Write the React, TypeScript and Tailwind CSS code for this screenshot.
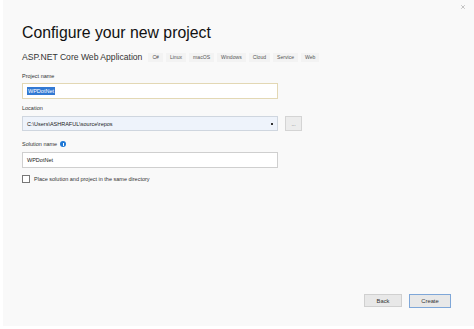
import { X } from 'lucide-react';

const tags = ['C#', 'Linux', 'macOS', 'Windows', 'Cloud', 'Service', 'Web'];

const App = () => {
  return (
    <div
      className="relative w-[474px] h-[329px] bg-white overflow-hidden text-[#1e1e1e]"
      style={{ fontFamily: '"Liberation Sans", Arial, sans-serif' }}
    >
      {/* Dialog surface */}
      <div className="absolute inset-0 bottom-[3px] left-[3px] bg-[#f9f9f9]" />

      {/* Close */}
      <button className="absolute right-[8px] top-[4px] text-[#666]">
        <X size={6} strokeWidth={1.5} />
      </button>

      <div className="relative flex flex-col h-full px-[22px]">
        <h1 className="mt-[22px] text-[15.8px] leading-[22px] font-normal text-[#111]">
          Configure your new project
        </h1>

        {/* Template + tags */}
        <div className="mt-[6px] flex items-center h-[14px]">
          <span className="text-[8.6px] text-[#333]">ASP.NET Core Web Application</span>
          <div className="ml-[6px] flex items-center gap-[3px]">
            {tags.map((t) => (
              <span key={t} className="px-[4px] py-[1px] text-[5.1px] leading-[7px] text-[#555] bg-[#f3f3f3]">
                {t}
              </span>
            ))}
          </div>
        </div>

        {/* Project name */}
        <label className="mt-[8px] text-[5.5px] leading-[8px] text-[#333]">Project name</label>
        <div className="mt-[3px] w-[256px] h-[16px] flex items-center px-[4px] bg-white border border-[#e3d8b4]">
          <span className="text-[5.5px] leading-[8px] px-[1px] bg-[#3279d3] text-white">WPDotNet</span>
        </div>

        {/* Location */}
        <label className="mt-[5px] text-[5.5px] leading-[8px] text-[#333]">Location</label>
        <div className="mt-[4px] flex items-center gap-[7px]">
          <div className="w-[256px] h-[15px] flex items-center justify-between px-[4px] bg-[#eef3fb] border border-[#cfd6df]">
            <span className="text-[5.5px] leading-[8px] text-[#222]">C:\Users\ASHRAFUL\source\repos</span>
            <span className="w-[2px] h-[2px] bg-[#333]" />
          </div>
          <div className="w-[17px] h-[15px] flex items-center justify-center bg-[#ececec] border border-[#d4d4d4]">
            <span className="text-[5px] leading-[6px] text-[#666]">...</span>
          </div>
        </div>

        {/* Solution name */}
        <div className="mt-[9px] flex items-center gap-[3px]">
          <label className="text-[5.5px] leading-[8px] text-[#333]">Solution name</label>
          <span className="w-[6px] h-[6px] rounded-full bg-[#1e78d6] flex items-center justify-center">
            <span className="w-[1px] h-[3px] bg-white" />
          </span>
        </div>
        <div className="mt-[4px] w-[256px] h-[16px] flex items-center px-[4px] bg-white border border-[#cfcfcf]">
          <span className="text-[5.5px] leading-[8px] text-[#222]">WPDotNet</span>
        </div>

        {/* Checkbox */}
        <div className="mt-[7px] flex items-center gap-[4px]">
          <span className="w-[8px] h-[8px] bg-white border border-[#777]" />
          <span className="text-[5.5px] leading-[8px] text-[#333]">Place solution and project in the same directory</span>
        </div>

        {/* Footer */}
        <div className="mt-auto mb-[21px] flex justify-end gap-[7px] pr-[1px]">
          <button className="w-[38px] h-[13px] bg-[#e8e8e8] border border-[#d0d0d0] text-[5.8px] leading-[8px] text-[#333]">
            Back
          </button>
          <button className="w-[42px] h-[14px] bg-[#e8e8e8] border border-[#7fa7d8] text-[5.8px] leading-[8px] text-[#333]">
            Create
          </button>
        </div>
      </div>
    </div>
  );
};

export default App;
